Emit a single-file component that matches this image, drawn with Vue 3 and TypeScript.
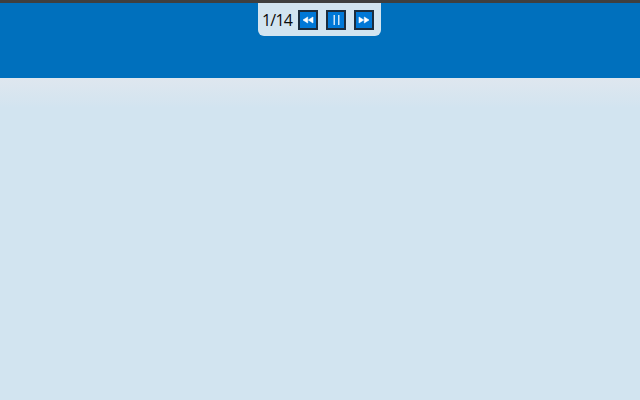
<script setup lang="ts">
const page: string = '1/14'
</script>

<template>
  <div class="page">
    <div class="topline"></div>
    <header class="band">
      <div class="controls">
        <span class="count">{{ page }}</span>
        <button class="btn" type="button" aria-label="Previous">
          <svg width="12" height="8" viewBox="0 0 12 8"><path d="M5.7 1V7L1 4ZM11 1V7L6.3 4Z" fill="#fff" stroke="#fff" stroke-width="0.6" stroke-linejoin="round" /></svg>
        </button>
        <button class="btn" type="button" aria-label="Pause">
          <svg width="8" height="10" viewBox="0 0 8 10"><path d="M1.5 0H3V10H1.5ZM6 0H7.5V10H6Z" fill="#cfe6f8" /></svg>
        </button>
        <button class="btn" type="button" aria-label="Next">
          <svg width="12" height="8" viewBox="0 0 12 8"><path d="M1 1V7L5.7 4ZM6.3 1V7L11 4Z" fill="#fff" stroke="#fff" stroke-width="0.6" stroke-linejoin="round" /></svg>
        </button>
      </div>
    </header>
    <main class="content"></main>
  </div>
</template>

<style>
html, body { margin: 0; padding: 0; }
</style>

<style scoped>
.page {
  width: 640px;
  height: 400px;
  display: flex;
  flex-direction: column;
  overflow: hidden;
  background: #d2e4f0;
}
.topline {
  height: 3px;
  background: #3f3f3f;
}
.band {
  height: 75px;
  background: #0070bd;
  display: flex;
  justify-content: center;
  align-items: flex-start;
}
.controls {
  width: 123px;
  height: 33px;
  margin-left: -1px;
  box-sizing: border-box;
  padding: 7px 7px 0 4px;
  display: flex;
  align-items: flex-start;
  background: #d2e4f0;
  border-radius: 0 0 6px 6px;
}
.count {
  width: 36px;
  height: 20px;
  font: 16px/20px "Open Sans", sans-serif;
  letter-spacing: -0.8px;
  color: #0a0a0a;
  white-space: nowrap;
}
.btn {
  width: 20px;
  height: 20px;
  margin-right: 8px;
  padding: 0;
  box-sizing: border-box;
  border: 2px solid #1a2c3e;
  background: #0078d7;
  display: flex;
  align-items: center;
  justify-content: center;
}
.btn:last-child { margin-right: 0; }
.content {
  flex: 1;
  background: linear-gradient(#dfe7ef 0, #d2e4f0 30px);
}
</style>
